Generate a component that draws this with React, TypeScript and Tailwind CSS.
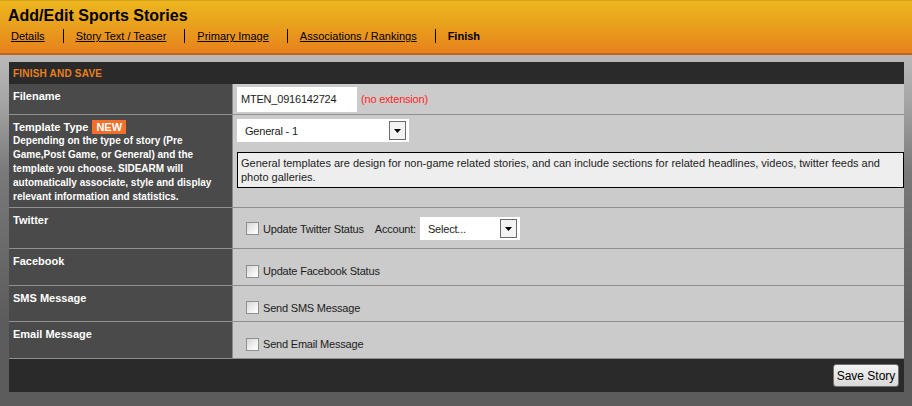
import { ReactNode } from 'react'

const tabs = ['Details', 'Story Text / Teaser', 'Primary Image', 'Associations / Rankings']

function Checkbox() {
  return (
    <span className="inline-block h-[13px] w-[13px] shrink-0 border border-[#8e8f8f] bg-[linear-gradient(135deg,#d6d6d6,#f4f4f4_65%,#ffffff)]" />
  )
}

function SelectBox({ value, width }: { value: string; width: string }) {
  return (
    <div className={`flex h-[23px] items-center justify-between bg-white pl-[8px] pr-[3px] ${width}`}>
      <span>{value}</span>
      <span className="flex h-[19px] w-[17px] items-center justify-center border border-[#6b6b6b] bg-[#f3f3f3]">
        <svg width="7" height="4" viewBox="0 0 7 4">
          <path d="M0 0h7L3.5 4z" fill="#000" />
        </svg>
      </span>
    </div>
  )
}

interface RowProps {
  children: ReactNode
  height: string
  label: ReactNode
  valueClass: string
}

function Row({ children, height, label, valueClass }: RowProps) {
  return (
    <div className={`flex border-b border-[#8f8f8f] ${height}`}>
      <div className="w-[224px] shrink-0 border-r border-[#8a8a8a] bg-[#4a4a4a] pl-[4px] pr-[6px] pt-[5px] text-[11px] font-bold leading-[14px] text-white">
        {label}
      </div>
      <div className={`min-w-0 flex-1 bg-[#cbcbcb] pl-[4px] text-[11px] leading-[14px] tracking-[-0.2px] text-[#1c1c1c] ${valueClass}`}>
        {children}
      </div>
    </div>
  )
}

function CheckLine({ text }: { text: string }) {
  return (
    <div className="flex items-center">
      <span className="ml-[9px] mr-[4px] flex">
        <Checkbox />
      </span>
      <span>{text}</span>
    </div>
  )
}

export default function App() {
  return (
    <div className="h-[406px] w-[912px] overflow-hidden bg-[linear-gradient(to_bottom,#b9b9b9_55px,#a6a6a6_100px,#7a7a7a_170px,#5c5c5c_320px)] font-['Liberation_Sans',Arial,sans-serif]">
      <header className="h-[55px] border-t border-[#d8a01a] border-b-2 border-b-[#c2631a] bg-[linear-gradient(to_bottom,#ecb61e,#e9a11d_45%,#e8811c)]">
        <h1 className="pl-[8px] pt-[5px] text-[16px] font-bold leading-[20px] text-black">
          Add/Edit Sports Stories
        </h1>
        <nav className="mt-[3px] flex pl-[11px] text-[11px] leading-[14px] text-black">
          {tabs.map(tab => (
            <span className="mr-[12px] border-r border-black pr-[18px]" key={tab}>
              <a className="underline">{tab}</a>
            </span>
          ))}
          <span className="font-bold">Finish</span>
        </nav>
      </header>

      <section className="ml-[9px] mr-[8px] mt-[7px]">
        <div className="flex h-[22px] items-center bg-[#2a2a2a] pl-[4px] text-[10px] font-bold tracking-[0.2px] text-[#e8801f]">
          FINISH AND SAVE
        </div>

        <Row height="h-[31px]" label="Filename" valueClass="flex items-center">
          <div className="flex h-[25px] w-[120px] items-center bg-white pl-[4px]">MTEN_0916142724</div>
          <span className="ml-[4px] text-[#ff2424]">(no extension)</span>
        </Row>

        <Row
          height="h-[93px]"
          label={
            <>
              <div className="flex items-center">
                <span>Template Type</span>
                <span className="ml-[4px] bg-[#f26f2c] px-[4px]">NEW</span>
              </div>
              <p className="text-[10px]">
                Depending on the type of story (Pre Game,Post Game, or General) and the template you choose. SIDEARM will automatically associate, style and display relevant information and statistics.
              </p>
            </>
          }
          valueClass="pt-[4px]"
        >
          <SelectBox value="General - 1" width="w-[172px]" />
          <div className="mt-[10px] border border-black bg-[#eeeeee] px-[3px] py-[3px] tracking-normal">
            General templates are design for non-game related stories, and can include sections for related headlines, videos, twitter feeds and photo galleries.
          </div>
        </Row>

        <Row height="h-[41px]" label="Twitter" valueClass="flex items-center pt-[1px]">
          <CheckLine text="Update Twitter Status" />
          <span className="ml-[11px] mr-[4px]">Account:</span>
          <SelectBox value="Select..." width="w-[100px]" />
        </Row>

        <Row height="h-[37px]" label="Facebook" valueClass="flex items-center pt-[8px]">
          <CheckLine text="Update Facebook Status" />
        </Row>

        <Row height="h-[36px]" label="SMS Message" valueClass="flex items-center pt-[8px]">
          <CheckLine text="Send SMS Message" />
        </Row>

        <Row height="h-[37px]" label="Email Message" valueClass="flex items-center pt-[8px]">
          <CheckLine text="Send Email Message" />
        </Row>

        <div className="flex h-[33px] items-center justify-end bg-[#2a2a2a] pr-[5px]">
          <button className="h-[23px] w-[66px] rounded-[3px] border border-[#707070] bg-[linear-gradient(to_bottom,#f4f4f4,#e6e6e6_50%,#d8d8d8)] text-[12px] text-black">
            Save Story
          </button>
        </div>
      </section>
    </div>
  )
}
